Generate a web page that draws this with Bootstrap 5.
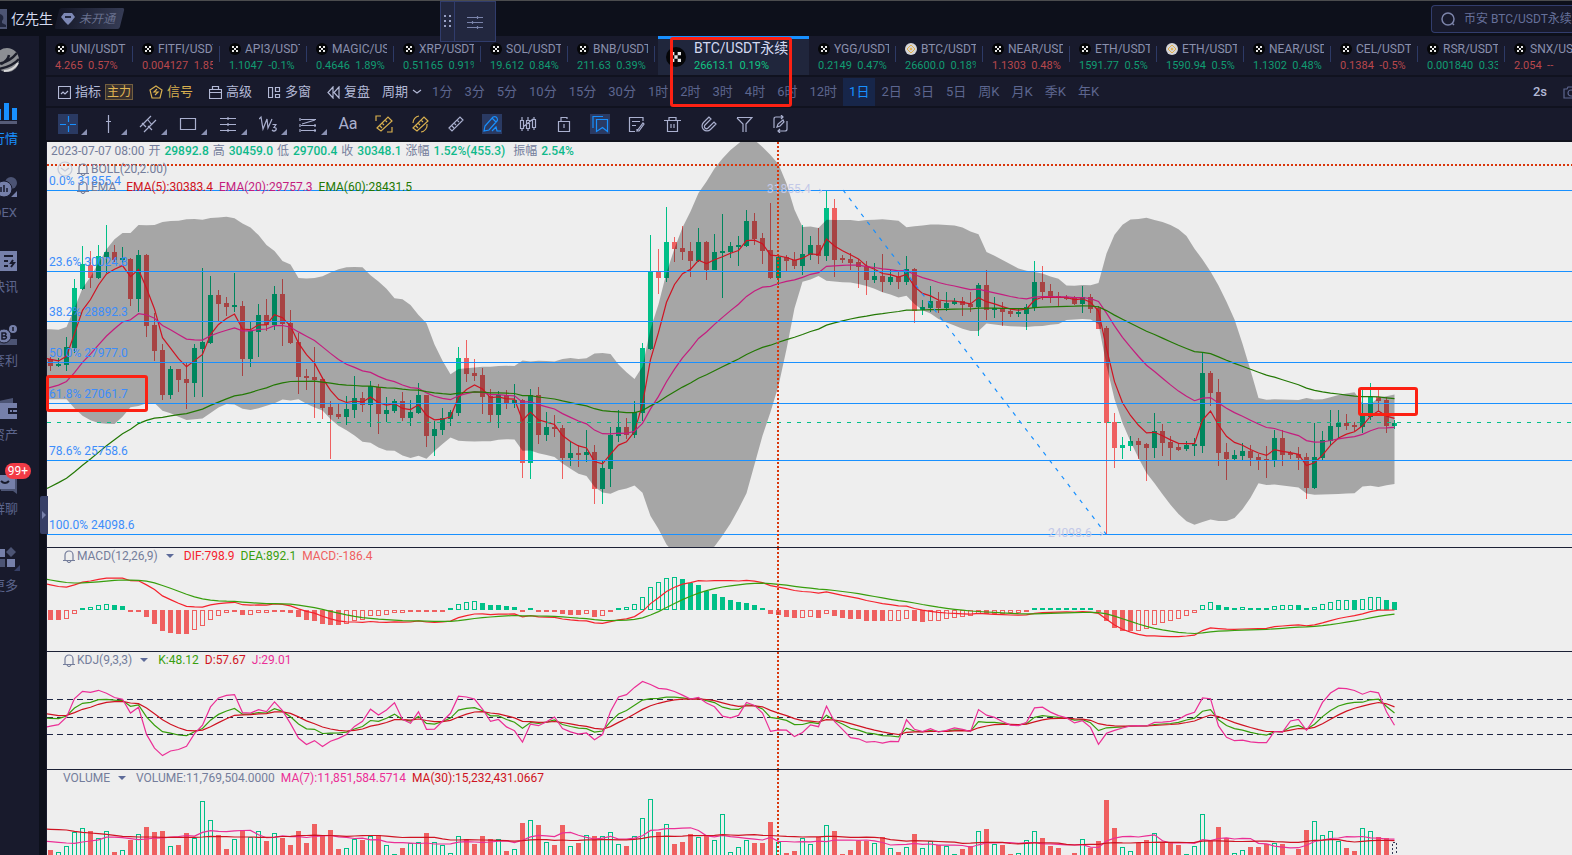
<!DOCTYPE html>
<html lang="zh-CN">
<head>
<meta charset="utf-8">
<meta name="viewport" content="width=device-width, initial-scale=1">
<title>BTC/USDT永续</title>
<link href="https://cdn.jsdelivr.net/npm/bootstrap@5.3.0/dist/css/bootstrap.min.css" rel="stylesheet">
<style>
:root{--ink:#0d101b;--panel:#181a2c;--muted:#5d668f;--soft:#8a90ad;--icon:#aab0cf;--blue:#1890ff;--up:#00c087;--down:#ef6060}
body{font:12px/16px Roboto,"Noto Sans CJK SC",sans-serif;background:var(--ink);color:var(--soft);height:100vh;overflow:hidden}
button{font:inherit;color:inherit;background:none;border:0;padding:0}
svg{display:block;flex:none}
.ic{fill:none;stroke:currentColor;stroke-width:1.2}
.topbar{height:36px;border-top:1px solid #4b4c4e}
.avatar{width:7px;height:20px;background:#4d5573;overflow:hidden}
.user{font-size:14px;color:#d5daf0}
.vip{height:21px;width:65px}
.vip::before{content:"";position:absolute;inset:0;background:linear-gradient(90deg,#151828,#353b54);transform:skewX(-14deg);border-radius:2px}
.vip span,.vip svg{position:relative}
.vip span{font-style:italic;color:#69718f}
.floatbox{position:absolute;left:440px;top:1px;width:56px;height:41px;background:#22273f;border:1px solid #303c6c;z-index:3;color:#7a83aa}
.floatbox .grip{width:14px;border-right:1px solid #303c6c}
.searchbox{width:141px;height:28px;background:var(--panel);border:1px solid #323d6d;border-right:0;border-radius:4px 0 0 4px;overflow:hidden;color:#7c84aa}
.searchbox input{background:none;border:0;outline:0;color:#66709a;font-size:12px;width:160px;padding:0}
.side{width:68px;margin-left:-29px;margin-right:7px;background:var(--panel);flex:none;color:#5c658c}
.side .brand{height:49px;padding-top:12px}
.side a{height:74px;padding-top:17px;color:inherit;text-decoration:none;font-size:13px;gap:5px;line-height:20px}
.side a.now{color:var(--blue)}
.unread{position:absolute;left:34px;top:8px;background:#f33b46;color:#fff;border-radius:8px;width:26px;height:16px;font-size:12px;line-height:16px;text-align:center}
.work{min-width:0;background:var(--panel)}
.tabs{height:41px;border-bottom:2px solid #10121f;overflow:hidden}
.pair{width:87px;padding:4px 7px 0 9px;flex:none;color:var(--soft);text-decoration:none;position:relative;line-height:18px}
.pair::after{content:"";position:absolute;right:0;top:10px;height:16px;width:1px;background:#2d3a66}
.pair div{white-space:nowrap;overflow:hidden}
.pair .quote{font-size:11px;line-height:16px;white-space:pre}
.pair.up .quote{color:#119c72}.pair.down .quote{color:#b9484d}
.pair.now{width:151px;background:#20263c;border-top:3px solid var(--blue);padding:0 8px;margin-left:3px}
.pair.now .title{font-size:14px;line-height:19px;color:#d3d9f0;margin-top:-2px}
.pair.now .quote{color:#10c483}
.pair.now::after{display:none}
.periods{height:31px;border-bottom:2px solid #10121f;font-size:13px;color:var(--muted);white-space:nowrap;overflow:hidden;padding-top:1px}
.periods .feat{color:#b3b9d6;gap:4px;margin-right:16px}
.periods .gold{color:#d9b04f}
.tagm{font-size:12px;line-height:14px;border:1px solid #745f3f;background:#37302e;color:#e0b653;padding:0 1px}
.periods .per{padding:0 6px;height:29px}
.periods .per.now{background:#17264a;color:var(--blue)}
.tools{height:34px;color:var(--icon);border-bottom:2px solid #11131d;padding-left:12px}
.tools button{width:20px;height:20px;margin-right:16px;display:flex;align-items:center;justify-content:center;position:relative;flex:none}
.tools button.more{margin-right:20px}
.tools button.more::after{content:"";position:absolute;left:23px;bottom:-1px;border:3px solid transparent;border-right-color:#8b91b3;border-bottom-color:#8b91b3}
.tools button.now{background:#2a3a63;color:var(--blue)}
.tools .gold{color:#d9b04f}
.charts{margin-left:1px;background:#eee}
.pane{position:relative;overflow:hidden;border-bottom:1px solid #1c2136;flex:none}
.pane>svg.plot{position:absolute;inset:0;width:100%;height:100%}
.pane .legend{position:relative;white-space:nowrap;color:#747d9b;padding-left:16px}
.p-main{height:406px}.p-macd{height:104px}.p-kdj{height:118px}.p-vol{flex:1 1 0;min-height:85px;border:0}
.plot text{font:12px Roboto,sans-serif}
.bars{shape-rendering:crispEdges}
.red{color:#cf1322}.pink{color:#c41d7f}.green{color:#237804}
.rose{color:#eb2f96}.lime{color:#389e0d}.scar{color:#f5222d}.coral{color:#ef6060}
.upb{color:#0fb98a;font-weight:500}
.caret{width:0;height:0;border:4px solid transparent;border-top-color:#5d6b99;border-bottom:0}
.bell{margin-right:2px}
.vals{gap:6px}
.ohlc{gap:4px;padding-top:1px}
.mark-box{position:absolute;border:3px solid #fc2113;border-radius:3px;z-index:4;pointer-events:none}
.handle{position:absolute;left:40px;top:496px;width:8px;height:38px;background:#363f66;border-radius:2px 0 0 2px;z-index:2;color:#7680aa;display:flex;align-items:center;justify-content:center}
</style>
</head>
<body class="d-flex flex-column position-relative">
<header class="topbar d-flex align-items-center flex-shrink-0">
  <div class="avatar"><svg width="8" height="20"><path d="M0 5a4 4 0 0 1 2 7v2l4 2v2H0z" fill="#20263c"/></svg></div>
  <span class="user ms-1">亿先生</span>
  <div class="vip position-relative d-flex align-items-center ms-1 ps-1">
    <svg width="14" height="14" class="me-1"><path d="M3 1h8l3 4-4 5-3 3-3-3-4-5z" fill="#7c87b4"/><path d="M4 5h6" stroke="#22273f" stroke-width="2"/></svg><span>未开通</span>
  </div>
  <label class="searchbox ms-auto d-flex align-items-center ps-2" aria-label="搜索">
    <svg class="ic me-2" width="16" height="16" style="stroke-width:1.5"><circle cx="8" cy="8" r="6"/><path d="m12 12 2 2"/></svg>
    <input type="text" value="币安 BTC/USDT永续">
  </label>
</header>
<div class="floatbox d-flex">
  <div class="grip d-flex align-items-center justify-content-center"><svg width="8" height="14" fill="#98a0c4"><path d="M0 0h2v2H0zM5 0h2v2H5zM0 5h2v2H0zM5 5h2v2H5zM0 10h2v2H0zM5 10h2v2H5z"/></svg></div>
  <button class="flex-fill d-flex align-items-center justify-content-center" aria-label="菜单"><svg class="ic" width="16" height="14"><path d="M0 2.500h16M0 7.500h16M0 12.500h16M10.500 1v3M5.500 6v3M10.500 11v3"/></svg></button>
</div>
<div class="d-flex flex-fill" style="min-height:0">
  <nav class="side d-flex flex-column text-center">
    <div class="brand d-flex justify-content-center"><svg width="30" height="26" viewBox="0 0 30 26" class="ms-1"><circle cx="15" cy="12" r="12" fill="#8d8f94"/><path d="M2 16Q16 16 25 5M6 21Q20 19 27 11M17 7q-1 6-8 9" stroke="#1c1e2b" stroke-width="2.500" fill="none"/><path d="M12 23q9 0 14-8" stroke="#d8d8da" stroke-width="2" fill="none"/></svg></div>
    <a href="#" class="now d-flex flex-column align-items-center position-relative"><svg width="24" height="22"><path d="M3 7h5v11H3zM11 1h5v17h-5zM19 6h5v12h-5z" fill="#1890ff"/><path d="M0 19h24v3H0z" fill="#565c78"/></svg>行情</a>
    <a href="#" class="d-flex flex-column align-items-center position-relative"><svg width="24" height="22"><circle cx="18" cy="7" r="6" fill="#4c5474"/><circle cx="11" cy="13" r="8" fill="#7680aa" stroke="#181a2c"/><path d="M8 11v5M11 9v7M14 12v4" stroke="#181a2c" stroke-width="1.500"/><path d="M24 15v6h-6zM0 6V1h7z" fill="#7680aa"/></svg>DEX</a>
    <a href="#" class="d-flex flex-column align-items-center position-relative"><svg width="24" height="22"><path d="M7 1h17v20H4V4h3z" fill="#7680aa"/><path d="M11 6h9M11 11h4M11 16h4M20 10l-2 3h3l-3 4" stroke="#181a2c" stroke-width="2" fill="none"/></svg>快讯</a>
    <a href="#" class="d-flex flex-column align-items-center position-relative"><svg width="24" height="22"><circle cx="20" cy="5" r="4" fill="#7680aa"/><path d="M4 15h20v6H4z" fill="#4c5474"/><circle cx="11" cy="12" r="7" fill="#7680aa" stroke="#181a2c"/><path d="M9 9h3q2 1 0 3 3 1 0 3H9zM9 12h3M20 3v4" stroke="#181a2c" stroke-width="1.500" fill="none"/></svg>套利</a>
    <a href="#" class="d-flex flex-column align-items-center position-relative"><svg width="24" height="22"><path d="m6 3 14-3v5H6z" fill="#4c5474"/><path d="M2 5h22v16H2z" fill="#7680aa"/><path d="M24 10h-9v6h9z" fill="#181a2c"/><path d="M17 12h7v2h-7z" fill="#7680aa"/><path d="M19 12h1v2h-1z" fill="#181a2c"/></svg>资产</a>
    <a href="#" class="d-flex flex-column align-items-center position-relative"><svg width="24" height="22"><path d="M8 6h16v16l-4-3H8z" fill="#4c5474"/><path d="M2 3h20v14H8l-4 3v-3H2z" fill="#7680aa"/><path d="M8 9q4 4 8 0" stroke="#181a2c" stroke-width="2" fill="none"/></svg>群聊<span class="unread">99+</span></a>
    <a href="#" class="d-flex flex-column align-items-center position-relative"><svg width="30" height="25"><path d="M7 3h8v8H7zM17 13h8v8h-8z" fill="#7680aa"/><path d="m21 1 5 5-5 5-5-5zM7 13h8v8H7z" fill="#4c5474"/><path d="M30 19v6h-6z" fill="#363f66"/></svg>更多</a>
  </nav>
  <main class="work flex-fill d-flex flex-column">
    <nav class="tabs d-flex flex-shrink-0" id="tabs"></nav>
    <div class="periods d-flex align-items-center flex-shrink-0 ps-2">
      <button class="feat d-flex align-items-center ms-1"><svg class="ic" width="13" height="13"><path d="M.5.500h12v12H.500zM3 8l2-2 2 2 3-3"/></svg>指标<span class="tagm">主力</span></button>
      <button class="feat gold d-flex align-items-center"><svg class="ic" width="14" height="14"><path d="m7 1 6 4-2 8H3L1 5zM8 4 5 7h4l-3 3"/></svg>信号</button>
      <button class="feat d-flex align-items-center"><svg class="ic" width="13" height="13"><path d="M.5 3.500h12v9H.500zM.5 6.500h12M3.500 3V.500h6V3"/></svg>高级</button>
      <button class="feat d-flex align-items-center"><svg class="ic" width="13" height="13"><path d="M.5 1.500h4v10h-4zM7.500 1.500h4v4h-4zM7.500 8.500h4v3h-4z"/></svg>多窗</button>
      <button class="feat d-flex align-items-center me-2"><svg class="ic" width="13" height="13"><path d="M6 1 1 6.500 6 12zM12 1 7 6.500l5 5.500z"/></svg>复盘</button>
      <button class="feat d-flex align-items-center me-1 ms-1">周期<svg class="ic" width="10" height="6"><path d="m1 1 4 3 4-3"/></svg></button>
      <span class="d-flex" id="periods"></span>
      <button class="feat ms-auto me-3 fw-medium">2s</button>
      <button class="text-start overflow-hidden" aria-label="截图"><svg class="ic" width="9" height="13"><path d="M1 3h3l1-2h5l1 2h4v9H1z"/><circle cx="8" cy="7" r="3"/></svg></button>
    </div>
    <div class="tools d-flex align-items-center flex-shrink-0" id="tools"></div>
    <div class="charts flex-fill d-flex flex-column">
      <section class="pane p-main">
        <svg class="plot" id="main"></svg>
        <div class="legend ps-1 d-flex ohlc">2023-07-07 08:00 <span>开</span><span class="upb">29892.8</span><span>高</span><span class="upb">30459.0</span><span>低</span><span class="upb">29700.4</span><span>收</span><span class="upb">30348.1</span><span>涨幅</span><span class="upb">1.52%(455.3)</span><span class="ms-1">振幅</span><span class="upb">2.54%</span></div>
        <div class="legend d-flex align-items-center" style="padding:2px 0 0 10px"><svg width="16" height="16" class="ic" style="color:#c3c9d8"><circle cx="8" cy="8" r="7"/><path d="m4 7 4 3 4-3"/></svg><svg class="ic bell ms-1" width="12" height="13"><path d="M0 10.500h12M2 10V5a4 4 0 0 1 8 0v5M4 11q2 3 4 0"/></svg>BOLL(20,2.00)</div>
        <div class="legend d-flex align-items-center vals" style="padding:2px 0 0 30px"><span class="d-flex align-items-center me-1"><svg class="ic bell" width="12" height="13"><path d="M0 10.500h12M2 10V5a4 4 0 0 1 8 0v5M4 11q2 3 4 0"/></svg>EMA</span><span class="red">EMA(5):30383.4</span><span class="pink">EMA(20):29757.3</span><span class="green">EMA(60):28431.5</span></div>
      </section>
      <section class="pane p-macd">
        <svg class="plot" id="macd"></svg>
        <div class="legend d-flex align-items-center vals"><span class="d-flex align-items-center"><svg class="ic bell" width="12" height="13"><path d="M0 10.500h12M2 10V5a4 4 0 0 1 8 0v5M4 11q2 3 4 0"/></svg>MACD(12,26,9)<i class="caret ms-2 me-1"></i></span><span class="scar">DIF:798.9</span><span class="lime">DEA:892.1</span><span class="coral">MACD:-186.4</span></div>
      </section>
      <section class="pane p-kdj">
        <svg class="plot" id="kdj"></svg>
        <div class="legend d-flex align-items-center vals"><span class="d-flex align-items-center"><svg class="ic bell" width="12" height="13"><path d="M0 10.500h12M2 10V5a4 4 0 0 1 8 0v5M4 11q2 3 4 0"/></svg>KDJ(9,3,3)<i class="caret ms-2 me-1"></i></span><span class="lime">K:48.12</span><span class="red">D:57.67</span><span class="rose">J:29.01</span></div>
      </section>
      <section class="pane p-vol">
        <svg class="plot" id="vol"></svg>
        <div class="legend d-flex align-items-center vals"><span class="d-flex align-items-center">VOLUME<i class="caret ms-2 me-1"></i></span><span>VOLUME:11,769,504.0000</span><span class="rose">MA(7):11,851,584.5714</span><span class="red">MA(30):15,232,431.0667</span></div>
      </section>
    </div>
  </main>
</div>
<button class="handle" aria-label="展开"><svg width="4" height="8"><path d="M0 0l4 4-4 4z" fill="currentColor"/></svg></button>
<div class="mark-box" style="left:670px;top:37px;width:122px;height:70px"></div>
<div class="mark-box" style="left:46px;top:375px;width:102px;height:37px"></div>
<div class="mark-box" style="left:1358px;top:387px;width:60px;height:29px"></div>

<script src="https://cdn.jsdelivr.net/npm/bootstrap@5.3.0/dist/js/bootstrap.bundle.min.js"></script>
<script>
// ---- pair tabs: name, price, change, direction, exchange logo ----
const okx = s => `<svg width="${s}" height="${s}" viewBox="0 0 12 12"><circle cx="6" cy="6" r="6" fill="#050608"/><path d="M3 3h2v2H3zM7 3h2v2H7zM5 5h2v2H5zM3 7h2v2H3zM7 7h2v2H7z" fill="#e6e6e6"/></svg>`;
const bnb = `<svg width="12" height="12" viewBox="0 0 12 12"><circle cx="6" cy="6" r="6" fill="#d5d5d8"/><path d="m6 2 4 4-4 4-4-4z" fill="none" stroke="#e3b04b"/><path d="m6 4.500 1.500 1.500L6 7.500 4.500 6z" fill="#e3b04b"/></svg>`;
const pairs = [
 ['UNI/USDT','4.265','0.57%','down'],['FITFI/USDT','0.004127','1.85%','down'],['API3/USDT','1.1047','-0.1%','up'],
 ['MAGIC/USDT','0.4646','1.89%','up'],['XRP/USDT','0.51165','0.91%','up'],['SOL/USDT','19.612','0.84%','up'],['BNB/USDT','211.63','0.39%','up'],
 ['BTC/USDT永续','26613.1','0.19%','now'],
 ['YGG/USDT','0.2149','0.47%','up'],['BTC/USDT','26600.0','0.18%','up',1],['NEAR/USDT','1.1303','0.48%','down'],['ETH/USDT','1591.77','0.5%','up'],
 ['ETH/USDT','1590.94','0.5%','up',1],['NEAR/USDT','1.1302','0.48%','up'],['CEL/USDT','0.1384','-0.5%','down'],['RSR/USDT','0.001840','0.33%','up'],['SNX/USDT','2.054','--','down']];
tabs.innerHTML = pairs.map(([n,p,c,d,b]) => d==='now'
 ? `<a href="#" class="pair now d-flex align-items-center gap-2">${okx(20)}<span><div class="title">${n}</div><div class="quote">${p}  ${c}</div></span></a>`
 : `<a href="#" class="pair ${d}"><div class="d-flex align-items-center gap-1">${b?bnb:okx(12)}<span>${n}</span></div><div class="quote">${p}  ${c}</div></a>`).join('');
periods.innerHTML = '1分 3分 5分 10分 15分 30分 1时 2时 3时 4时 6时 12时 1日 2日 3日 5日 周K 月K 季K 年K'.split(' ')
 .map(p => `<button class="per${p==='1日'?' now':''}">${p}</button>`).join('');

// ---- drawing tools: class, icon ----
const t = [
 ['more now','M9.500 1v6M9.500 11v6M1 9.500h6M11 9.500h6'],['more','M9.500 0v18M7 6.500h5'],
 ['more','M1 12 12 1M5 17 17 5M3 8l4 4M9 5l4 5M9 11l4 4'],['more','M1.500 3.500h15v11h-15z'],
 ['more','M1 3.500h16M1 9.500h16M1 15.500h16M9 2v3M9 8v3M9 14v3'],['more','M0 4l2-2 2 12L8 4l1 9 4-9M13.500 9.500h3.500l-2 3q3 0 2 2.500-2 2-4 0'],
 ['more','M2 4.500h15M2 10.500h15M2 15.500h15M1 3v3M1 9v3M1 14v3M16 9v3M16 14v3M3 9l13-4'],['','Aa'],
 ['gold','M1 6V1h5M17 12v5h-5M2 13 13 2l4 4L6 16zM7 8l2 2M10 5l2 2M5 11l2 2'],['gold','M2 8a7 7 0 0 1 6-7M16 9a7 7 0 0 1-6 8M2 13 13 2l4 4L6 16zM7 8l2 2M10 5l2 2M5 11l2 2'],
 ['','M2 13 13 2l3 3L5 16zM7 8l2 2M10 5l2 2M5 11l2 2'],['now','M1 16l1-5 8-9q3-1 4 1t0 3L6 15zM9 3l4 4M9 16l4-4 1 4h4'],
 ['','M1.500 5.500h3v8h-3zM7.500 5.500h3v8h-3zM13.500 4.500h3v8h-3zM3 2v3M3 13v3M9 2v3M9 13v3M15 2v3M15 12v3M4 12l10-8'],
 ['','M3.500 6.500h11v10h-11zM6 6V2.500h6V4M9 9v4'],['now','M5.500 4.500h11v12l-5-4-6 4zM2 13V1.500h10'],
 ['','M16 6V2.500H2.500v14H8M5 6.500h8M5 10.500h4M10 16l6-8 1 1-5 7zM10 16v-2'],['','M1 5.500h17M4.500 6v10.500h10V6M6 5V2.500h7V5M8 9v4M11 9v4'],
 ['','M10 2 4.500 7.500a5 5 0 0 0 0 7 5 5 0 0 0 7 0L17 9l-2-2-6 6a2 2 0 0 1-3-3l6-6z'],['','M2 2.500h15L11 9v8M8 17V9L2 3'],
 ['','M3 13V4q0-2 2-2h7M10 0l2 2-2 2M16 6v8q0 2-2 2H7M9 14l-2 2 2 2M6 12l1-3 5-4 1 2-4 4z']];
tools.innerHTML = t.map(([c,d]) => `<button class="${c}">${d==='Aa'?'<span style="font-size:16px">Aa</span>':`<svg class="ic" width="18" height="18"><path d="${d}"/></svg>`}</button>`).join('');

// ---- daily candles, oldest first: direction, body top, body bottom, high, low (three ticks per pixel) ----
const raw = `r688,708,680,722 g702,707,685,712 g651,705,622,722 g475,655,447,670 g402,477,348,480 r404,443,363,474 g378,443,346,446 g366,381,285,430 r366,390,345,395 g384,390,350,398
r387,507,384,528 g375,507,360,547 r375,587,372,620 r585,662,550,693 r660,795,643,811 g717,795,708,806 r717,750,717,785 r747,759,695,838 g654,759,642,801 g636,657,415,801
g495,639,438,642 r495,522,480,573 r519,531,501,558 g525,531,430,547 r528,687,513,738 g603,687,573,711 g555,606,522,680 r555,585,507,602 g492,585,467,600 r492,582,447,648
r579,639,540,642 r636,741,609,792 r738,744,717,780 r741,750,651,864 r747,834,742,867 r831,855,813,986 r851,861,822,867 g837,861,798,885 g804,840,738,864 r804,824,785,846
g769,824,753,890 r771,852,762,911 g840,852,801,877 g812,843,806,848 r813,864,786,873 g846,864,810,888 g795,849,760,852 r795,918,795,950 g897,918,874,977 g864,900,834,914
g846,867,840,887 g684,849,651,858 r684,732,631,755 r729,738,686,753 r735,801,713,852 r798,855,777,876 g795,855,783,895 r795,819,780,837 g810,819,762,833 r810,999,808,1043
g795,999,777,1046 r795,915,771,943 g891,915,846,933 r891,897,855,922 r894,984,885,1047 g969,984,932,1008 r969,975,945,1011 g966,975,900,996 r966,1077,944,1121 g1014,1077,990,1121
g915,1017,890,1071 g891,918,840,936 r891,915,863,926 g846,915,813,925 g654,849,639,873 g423,657,315,660 r423,444,357,492 g336,444,231,455 r336,357,320,396 r354,366,287,390
r363,393,337,440 g336,393,293,396 r336,420,333,449 g366,420,313,421 g363,369,252,503 g348,366,337,384 g345,351,318,407 g273,348,240,351 r273,327,249,345 r324,363,308,401
r360,444,219,447 g381,444,372,465 r381,393,375,424 r390,408,366,417 g372,408,286,434 g345,375,318,390 r345,378,295,402 g234,378,183,392 r234,390,207,441 r384,390,375,398
r387,399,368,420 r396,411,387,474 r408,450,393,494 g438,450,400,458 r438,456,372,486 g441,456,420,464 r441,456,426,477 g417,456,378,464 r417,543,413,578 g531,540,510,554
g513,534,468,546 r513,534,486,549 g519,534,487,543 g513,522,504,526 r513,525,500,557 r522,531,487,545 g465,531,460,617 r465,540,420,570 g535,540,502,564 r535,546,515,587
r543,552,537,560 g546,552,534,560 g531,552,521,600 g456,534,393,542 r456,486,408,510 r483,500,461,518 r498,503,485,528 r500,504,496,509 r501,522,498,524 g501,522,467,548
r501,537,492,548 r534,597,528,597 r594,879,588,1212 r876,954,849,1014 g945,954,922,987 g933,948,918,964 r933,945,923,986 r942,954,938,1053 g903,954,849,984 r903,939,881,978
r936,954,917,990 r951,960,940,962 g944,958,934,962 g941,947,925,977 g728,947,668,968 r728,789,722,827 r786,969,746,1007 r966,987,938,1049 g974,987,961,992 g962,978,938,989
r962,984,944,1008 r981,990,971,1019 r986,991,949,1044 g924,990,899,1010 r924,975,901,1007 r969,975,963,987 r971,984,950,1020 r981,1074,970,1108 g981,1074,878,1076 g930,984,902,990
g888,934,841,944 g879,892,839,926 r879,889,852,901 r885,892,875,904 g851,892,771,910 g800,861,759,870 r800,813,781,847 r810,889,801,910 g879,888,869,898`;
const C = raw.trim().split(/\s+/).map(s => { const [a,b,h,l] = s.slice(1).split(',').map(Number); return {up:s[0]==='g',a,b,h,l,c:s[0]==='g'?a:b}; });
const N = C.length, X = i => 3.5 + 8*i, close = C.map(k => k.c);
const UP = '#00c087', DOWN = '#ef6060';
// a series runs on to the pane's left edge with the slope of its first two points
const line = (ys, col) => `<polyline fill="none" stroke="${col}" stroke-width="1.2" points="0,${(ys[0]-(ys[1]-ys[0])*.44).toFixed(1)} ${ys.map((y,i)=>X(i)+','+y.toFixed(1)).join(' ')}"/>`;
const hline = (y, col, dash='') => `<line x1="0" x2="100%" y1="${y}" y2="${y}" stroke="${col}" stroke-dasharray="${dash}"/>`;
const ema = (src, n, v) => src.map((s,i) => i ? v += (s-v)*2/(n+1) : v);
const cross = '<line x1="731" x2="731" y1="0" y2="100%" stroke="#d9360b" stroke-width="2" stroke-dasharray="2 2"/>';
const bar = (i, y, h, col, full) => full ? `<rect x="${1+8*i}" y="${y}" width="5" height="${h}" fill="${col}"/>` : `<rect x="${1.5+8*i}" y="${y+.5}" width="4" height="${Math.max(1,h-1)}" fill="none" stroke="${col}"/>`;

// ---- price pane ----
const Y = v => v/3 - 12;
const upper = [598,599,591,535,475,440,400,358,328,309,309,285,286,285,276,273,272,268,267];
const lower = [808,808,808,835,857,871,879,881,882,860,832,828,820,819,842,850,860,870,868];
for (let i=19;i<N;i++){ const w = close.slice(i-19,i+1), m = w.reduce((a,b)=>a+b)/20, sd = Math.sqrt(w.reduce((a,b)=>a+(b-m)**2,0)/20); upper[i]=m-2*sd; lower[i]=m+2*sd; }
const band = upper.map((y,i)=>X(i)+','+Y(y).toFixed(1)).concat(lower.map((y,i)=>X(i)+','+Y(y).toFixed(1)).reverse());
let s = '<g class="bars">' + C.map((k,i) => { const col = k.up?UP:DOWN, y = Math.round(Y(k.a)), h = Math.max(2,Math.round(Y(k.b))-y), t = Math.round(Y(k.h));
  return `<rect x="${3+8*i}" y="${t}" width="1" height="${Math.round(Y(k.l))-t}" fill="${col}"/><rect x="${1+8*i}" y="${y}" width="5" height="${h}" fill="${col}"/>`; }).join('') + '</g>';
s += `<polygon points="0,${Y(598)} ${band.join(' ')} 0,${Y(808)}" fill="#000" fill-opacity=".3"/>`;
s += line(ema(close,5,688).map(Y),'#cf1322') + line(ema(close,20,772).map(Y),'#c41d7f') + line(ema(close,60,1070).map(Y),'#237804');
s += hline(280.5,UP,'4 6');
[[48.5,'0.0% 31855.4'],[129.5,'23.6% 30024.8'],[179.5,'38.2% 28892.3'],[220.5,'50.0% 27977.0'],[261.5,'61.8% 27061.7'],[318.5,'78.6% 25758.6'],[392.5,'100.0% 24098.6']]
 .forEach(([y,l]) => s += hline(y,'#1890ff') + `<text x="2" y="${y-6}" fill="#3c8dfb">${l}</text>`);
s += `<line x1="796" y1="48" x2="1059" y2="392" stroke="#1890ff" stroke-width="1.200" stroke-dasharray="4 6"/>`;
s += `<g fill="#c3c9e8"><text x="720" y="51">31855.4</text><text x="1001" y="395">24098.6</text></g><path d="M772 47l3 2-3 2M1053 390l3 2-3 2" fill="none" stroke="#c3c9e8"/>`;
s += `<line x1="0" x2="100%" y1="23" y2="23" stroke="#d9360b" stroke-width="2" stroke-dasharray="2 2"/>` + cross;
main.innerHTML = s;

// ---- MACD(12,26,9) ----
const e12 = ema(close,12,718), e26 = ema(close,26,834), dif = e12.map((v,i)=>(e26[i]-v)*.648/3), dea = ema(dif,9,30);
s = '<g class="bars">'; let prev = -9;
dif.forEach((d,i) => { const v = 2*(d-dea[i]), h = Math.max(2,Math.round(Math.abs(v))); s += v>=0 ? bar(i,62-h,h,UP,v<prev||h<3) : bar(i,62,h,DOWN,v<prev||h<3); prev = v; });
macd.innerHTML = s + '</g>' + line(dif.map(d=>62-d),'#f5222d') + line(dea.map(d=>62-d),'#389e0d') + cross;

// ---- KDJ(9,3,3) ----
const K = [48.3,47.7,52.3,66,74,75.7,80.3,80.9], D = [55.1,52.9,53.4,58,63.7,67.1,72.3,75.7];
for (let i=8;i<N;i++){ const w = C.slice(i-8,i+1), hi = Math.min(...w.map(k=>k.h)), lo = Math.max(...w.map(k=>k.l)); K[i] = K[i-1]*2/3 + (lo-close[i])/(lo-hi)*100/3; D[i] = D[i-1]*2/3 + K[i]/3; }
const kd = v => 65.3 - (v-50)*.583;
kdj.innerHTML = [47.5,65.5,82.5].map(y=>hline(y,'#1f2744','6 4')).join('') + line(K.map(kd),'#389e0d') + line(D.map(kd),'#cf1322') + line(K.map((k,i)=>kd(3*k-2*D[i])),'#eb2f96') + cross;

// ---- volume: top of each bar, three ticks per pixel ----
const V = `1350 1356 1339 1297 1285 1293 1315 1294 1356 1351 1319 1303 1281 1296 1293 1339 1335 1299 1315 1203 1261 1306 1347 1318 1291 1312 1294 1323 1300 1314 1335 1293 1329 1272 1309 1290 1347 1344 1318 1320 1309 1306 1336 1362
1344 1329 1327 1299 1327 1336 1360 1309 1318 1332 1308 1318 1318 1353 1348 1269 1261 1275 1327 1335 1275 1339 1329 1306 1308 1309 1297 1333 1338 1309 1255 1198 1297 1273 1332 1326 1302 1312 1309 1321 1243 1356 1342 1321 1329 1329 1266 1325 1359
1353 1315 1333 1312 1276 1293 1362 1350 1323 1323 1330 1311 1345 1356 1342 1302 1345 1324 1336 1339 1362 1347 1339 1294 1287 1333 1335 1362 1360 1321 1294 1314 1338 1344 1372 1359 1318 1344 1323 1200 1284 1342 1354 1330 1320 1300 1327 1329 1334
1362 1338 1243 1322 1280 1314 1359 1351 1342 1342 1333 1330 1332 1375 1347 1290 1264 1306 1294 1322 1345 1352 1284 1293 1310 1313 1325`.trim().split(/\s+/).map(Number);
const VY = v => (v-1110)/3, ma = (n, head) => V.map((_,i) => VY(i<head.length ? head[i] : V.slice(i-n+1,i+1).reduce((a,b)=>a+b)/n));
const ma30head = [1288,1289,1290,1294,1297,1299,1301,1303,1306,1309,1310,1311,1311,1311,1312,1312,1312,1312,1312,1311,1309,1310,1310,1311,1311,1311,1312,1312,1311];
s = '<g class="bars">';
V.forEach((v,i) => { const y = Math.round(VY(v)); s += i===N-1 ? `<path d="M${1.5+8*i} 100V${y+.5}h4V100" fill="none" stroke="#333a55" stroke-dasharray="2 2"/>` : bar(i,y,100-y,C[i].up?UP:DOWN,!C[i].up); });
vol.innerHTML = s + '</g>' + line(ma(7,[1325,1327,1329,1330,1326,1323]),'#eb2f96') + line(ma(30,ma30head),'#cf1322') + cross;
</script>
</body>
</html>
